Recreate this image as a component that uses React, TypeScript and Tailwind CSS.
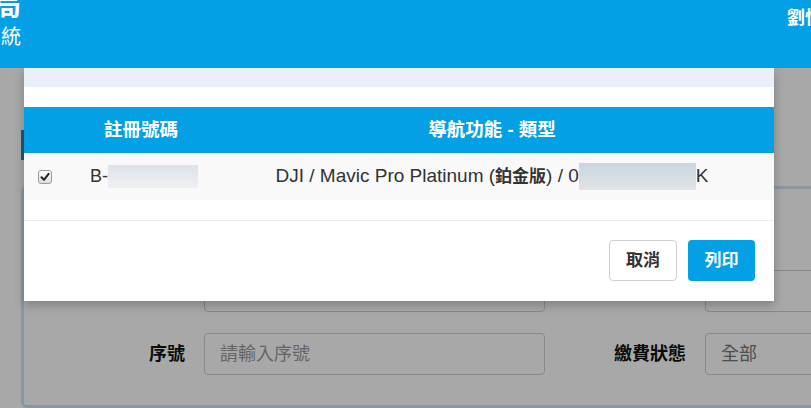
import React from "react";

const FONT = { fontFamily: '"Liberation Sans", "Noto Sans CJK TC", sans-serif' };

function Check() {
  return (
    <span className="flex h-[14px] w-[14px] items-center justify-center rounded-[3px] border border-[#9a9a9a] bg-gradient-to-b from-[#fdfdfd] to-[#dedede]">
      <svg width="10" height="10" viewBox="0 0 10 10">
        <path d="M1.5 5.2 L4 7.8 L8.6 1.8" fill="none" stroke="#222" strokeWidth="2" strokeLinecap="round" strokeLinejoin="round" />
      </svg>
    </span>
  );
}

export default function App() {
  return (
    <div className="relative h-[408px] w-[811px] overflow-hidden bg-white" style={FONT}>
      {/* header */}
      <div className="relative z-30 flex h-[68px] justify-between bg-[#03a0e6] text-white">
        <div className="flex w-[21px] flex-col items-end overflow-hidden">
          <div className="-mt-[11px] whitespace-nowrap text-[28px] font-bold leading-[36px]">民用航空局</div>
          <div className="whitespace-nowrap text-[20px] leading-[24px]">無人機管理系統</div>
        </div>
        <div className="w-[24px] overflow-hidden pt-[6px]">
          <div className="whitespace-nowrap text-[18px] font-bold leading-[24px]">劉怡君</div>
        </div>
      </div>

      {/* page under overlay */}
      <div className="flex w-[900px] flex-col pl-[21px]">
        <div className="mt-[62px] h-[30px] w-[3px] bg-[#2f88c9]" />
        <div className="mt-[26px] flex h-[222px] flex-col rounded-[6px] border-[3px] border-[#d4e6f7]">
          <div className="mt-[81px] flex items-center">
            <div className="w-[180px] shrink-0" />
            <div className="h-[42px] w-[341px] shrink-0 rounded-[4px] border border-[#d1d1d1]" />
            <div className="w-[160px] shrink-0" />
            <div className="h-[42px] w-[200px] shrink-0 rounded-[4px] border border-[#d1d1d1]" />
          </div>
          <div className="mt-[21px] flex items-center">
            <div className="w-[180px] shrink-0 pr-[19px] text-right text-[18px] font-bold text-[#111]">序號</div>
            <div className="flex h-[42px] w-[341px] shrink-0 items-center rounded-[4px] border border-[#d1d1d1] px-[15px] text-[18px] text-[#9a9a9a]">請輸入序號</div>
            <div className="w-[160px] shrink-0 pr-[19px] text-right text-[18px] font-bold text-[#111]">繳費狀態</div>
            <div className="flex h-[42px] w-[200px] shrink-0 items-center rounded-[4px] border border-[#d1d1d1] px-[15px] text-[18px] text-[#777]">全部</div>
          </div>
        </div>
      </div>

      {/* overlay */}
      <div className="absolute inset-0 z-10 bg-black/[0.34]" />

      {/* modal */}
      <div className="absolute left-[24px] top-[68px] z-20 w-[750px] bg-white shadow-[0_4px_10px_rgba(0,0,0,0.25)]">
        <div className="h-[19px] bg-[#e9f0f7]" />
        <div className="h-[20px]" />
        <div className="flex h-[46px] items-center bg-[#03a0e6] text-[18.5px] font-bold text-white">
          <div className="w-[48px]" />
          <div className="w-[138px] text-center">註冊號碼</div>
          <div className="flex-1 text-center">導航功能 - 類型</div>
        </div>
        <div className="flex h-[47px] items-center bg-[#f9f9f9] text-[19px] text-[#333]">
          <div className="flex w-[48px] justify-start pl-[14px]">
            <Check />
          </div>
          <div className="flex w-[138px] items-center justify-start pl-[18px]">
            <span className="text-[18px]">B-</span>
            <span className="h-[23px] w-[90px] bg-gradient-to-b from-[#dde3ea] to-[#eef0f3]" />
          </div>
          <div className="flex flex-1 items-center justify-center">
            <span>
              DJI / Mavic Pro Platinum (<b className="text-[17px]">鉑金版</b>) / 0
            </span>
            <span className="h-[27px] w-[117px] bg-gradient-to-b from-[#c8d6e1] to-[#e2e3e5]" />
            <span>K</span>
          </div>
        </div>
        <div className="h-[20px]" />
        <div className="flex justify-end gap-[11px] border-t border-[#ececec] px-[19px] pb-[20px] pt-[19px]">
          <button className="h-[41px] w-[68px] rounded-[4px] border border-[#cfcfcf] bg-white text-[17px] font-bold text-[#333]">取消</button>
          <button className="h-[41px] w-[67px] rounded-[4px] bg-[#03a0e6] text-[17px] font-bold text-white">列印</button>
        </div>
      </div>
    </div>
  );
}
